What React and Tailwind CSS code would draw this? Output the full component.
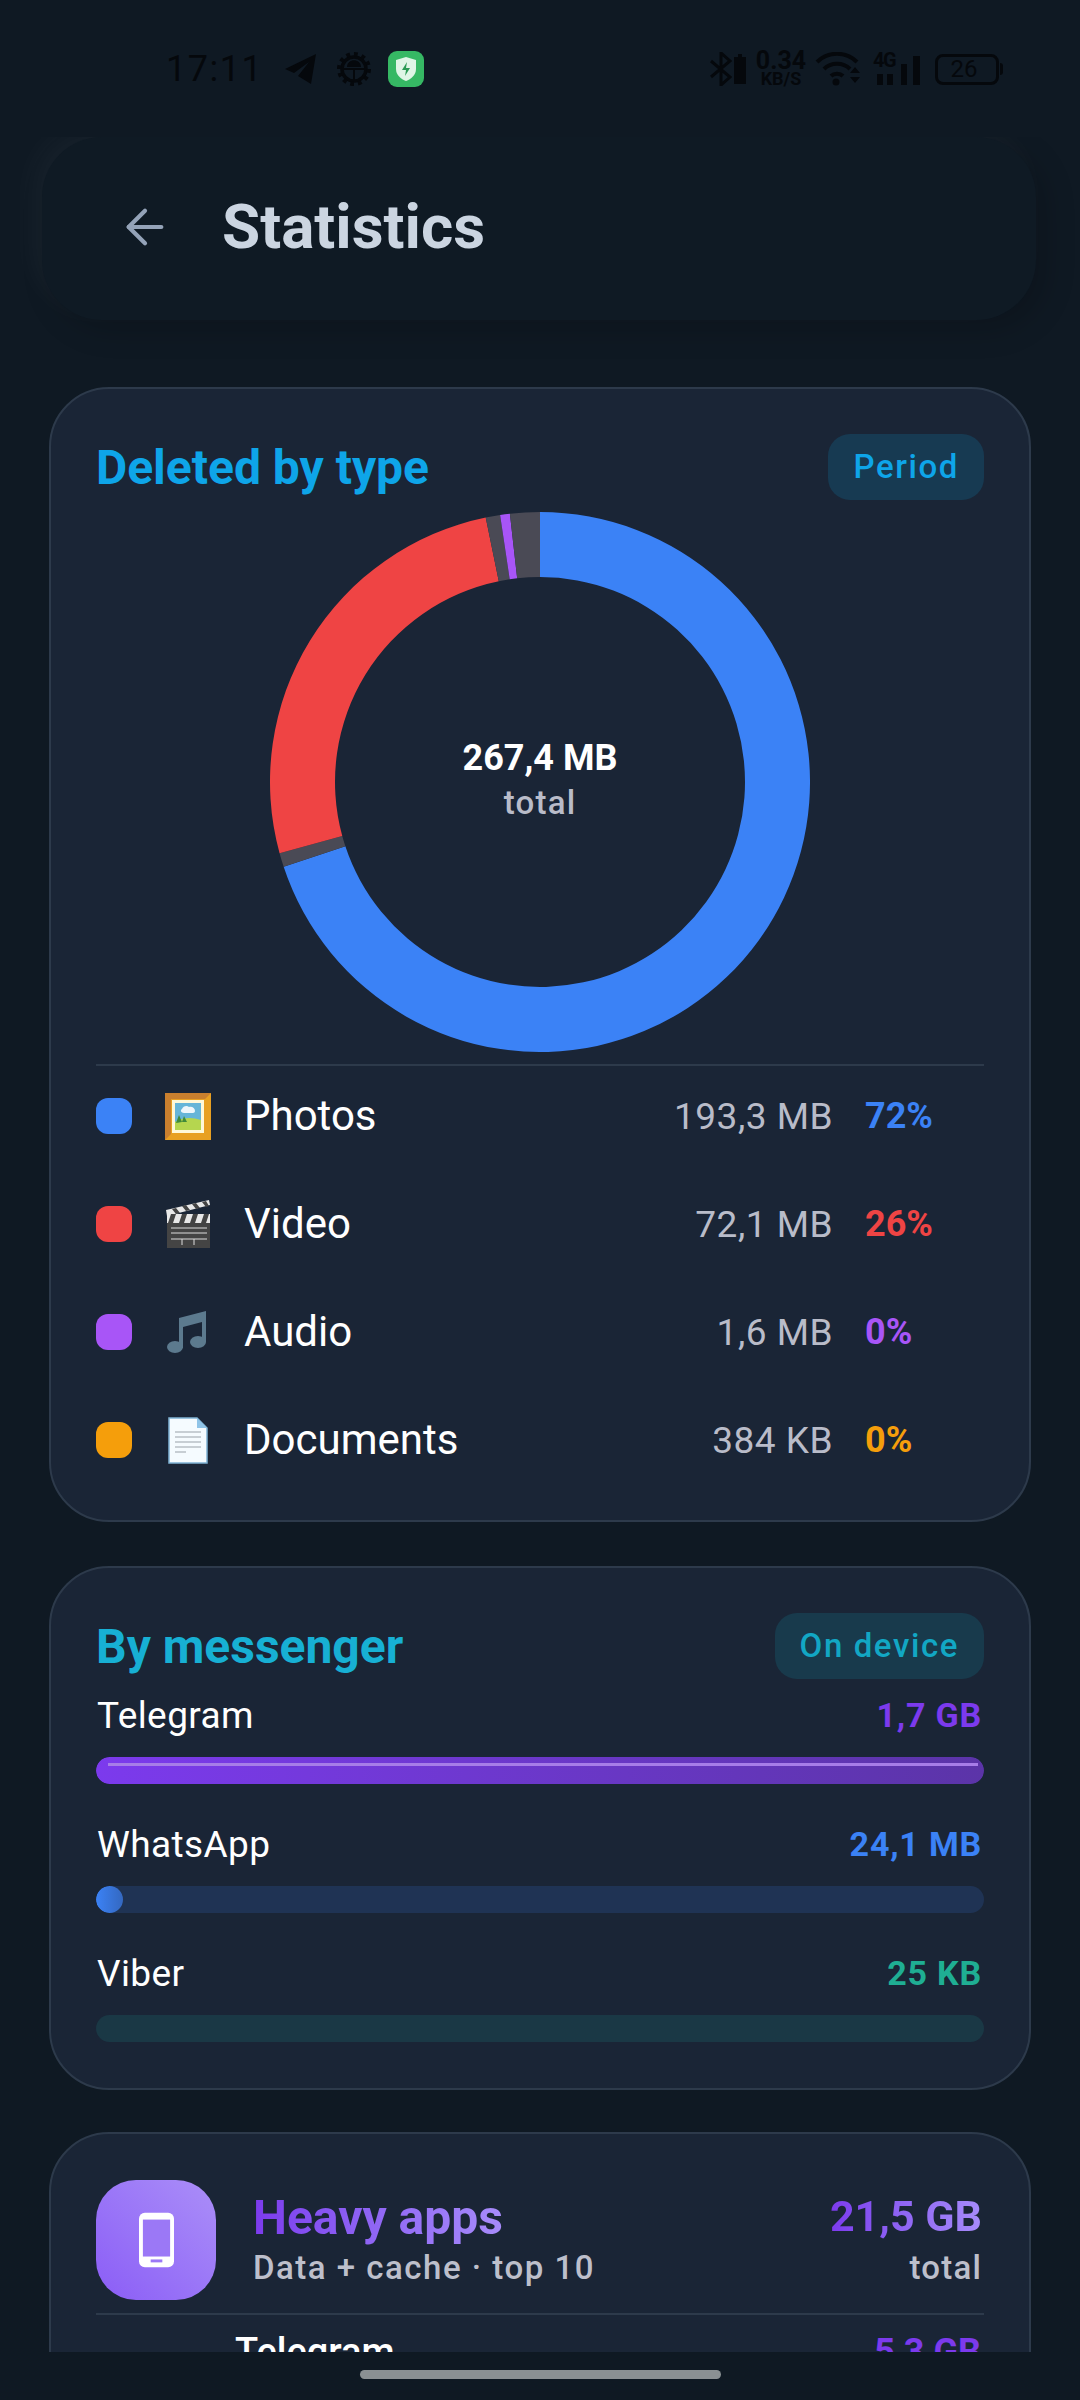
import { ArrowLeft } from 'lucide-react';

const rows = [
  { name: 'Photos', size: '193,3 MB', pct: '72%', dot: 'bg-[#3b82f6]', text: 'text-[#3b82f6]', Icon: PictureIcon },
  { name: 'Video', size: '72,1 MB', pct: '26%', dot: 'bg-[#ef4444]', text: 'text-[#ef4444]', Icon: ClapperIcon },
  { name: 'Audio', size: '1,6 MB', pct: '0%', dot: 'bg-[#a855f7]', text: 'text-[#a855f7]', Icon: NoteIcon },
  { name: 'Documents', size: '384 KB', pct: '0%', dot: 'bg-[#f59e0b]', text: 'text-[#f59e0b]', Icon: DocIcon },
];

const messengers = [
  { name: 'Telegram', size: '1,7 GB', text: 'text-[#7c3aed]', track: 'bg-[#2b2a5a]', fill: 'w-full bg-gradient-to-r from-[#7c3aed] to-[#5b34a8]', shine: true },
  { name: 'WhatsApp', size: '24,1 MB', text: 'text-[#3b82f6]', track: 'bg-[#1f3354]', fill: 'w-[27px] bg-gradient-to-r from-[#3b82f6] to-[#3468c0]' },
  { name: 'Viber', size: '25 KB', text: 'text-[#1fae93]', track: 'bg-[#1a3845]', fill: 'w-0' },
];

const wedge = (from, to, ro = 270, ri = 205) => {
  const pt = (a, r) => {
    const t = (a * Math.PI) / 180;
    return `${(270 + r * Math.sin(t)).toFixed(2)} ${(270 - r * Math.cos(t)).toFixed(2)}`;
  };
  const large = to - from > 180 ? 1 : 0;
  return `M${pt(from, ro)} A${ro} ${ro} 0 ${large} 1 ${pt(to, ro)} L${pt(to, ri)} A${ri} ${ri} 0 ${large} 0 ${pt(from, ri)} Z`;
};

function PictureIcon() {
  return (
    <svg width="46" height="47" viewBox="0 0 46 47">
      <rect width="46" height="47" fill="#e8a022" />
      <path d="M0 0h46l-6 6H6v35l-6 6z" fill="#c97f2e" />
      <rect x="7" y="7" width="32" height="33" fill="#fff8d8" />
      <rect x="10" y="10" width="26" height="27" fill="#66b5d8" />
      <path d="M10 29c8-5 17-5 26-2v10H10z" fill="#b5d64f" />
      <path d="M11 30l3-8 3 7zM17 29l2-6 3 6z" fill="#3f8a3a" />
      <path d="M17 16c1-3 5-4 7-2 3-1 6 1 6 4 0 1-1 2-2 2h-9c-3 0-4-3-2-4z" fill="#eef6fb" />
    </svg>
  );
}

function ClapperIcon() {
  return (
    <svg width="46" height="48" viewBox="0 0 46 48">
      <path d="M1 10L44 0l1 5-43 11z" fill="#e8e8e8" />
      <path d="M7 9l4 5 4-1-4-5zM17 6l4 5 4-1-4-5zM27 4l4 5 4-1-4-5zM37 2l4 5 3-1-3-5z" fill="#444" />
      <rect x="2" y="16" width="43" height="32" fill="#444" />
      <rect x="2" y="14" width="43" height="9" fill="#e8e8e8" />
      <path d="M6 14l-3 9h5l3-9zM17 14l-3 9h5l3-9zM28 14l-3 9h5l3-9zM39 14l-3 9h5l3-9z" fill="#444" />
      <path d="M6 28h36M6 33h36M6 39h36M17 39v6M29 39v6" stroke="#ddd" strokeWidth="1" fill="none" />
    </svg>
  );
}

function NoteIcon() {
  return (
    <svg width="42" height="44" viewBox="0 0 42 44">
      <path d="M12 8L39 1v31h-4V12L16 17v21h-4z" fill="#5c7a8e" />
      <ellipse cx="8" cy="37" rx="8" ry="6" fill="#5c7a8e" />
      <ellipse cx="31" cy="32" rx="8" ry="6" fill="#5c7a8e" />
    </svg>
  );
}

function DocIcon() {
  return (
    <svg width="40" height="47" viewBox="0 0 40 47">
      <path d="M1 1h28l10 10v35H1z" fill="#f5fbff" stroke="#7fb3d5" strokeWidth="1.5" />
      <path d="M29 1l10 10H29z" fill="#90c4e8" />
      <path d="M7 15h26M7 20h26M7 25h26M7 30h26M7 35h11" stroke="#b8c0c6" strokeWidth="1.5" />
    </svg>
  );
}

function StatusBar() {
  return (
    <div className="h-[137px] shrink-0 flex items-start justify-between pl-[166px] pr-[77px] pt-[51px] text-[#05080c]">
      <div className="flex items-center h-[36px]">
        <span className="text-[36px] leading-none tracking-[1.5px] w-[89px]">17:11</span>
        <svg className="ml-[30px]" width="32" height="30" viewBox="0 0 32 30" fill="#05080c">
          <path d="M31 0L0 15l9 4 15-11-11 14 13 8z" />
        </svg>
        <svg className="ml-[20px]" width="34" height="34" viewBox="0 0 34 34" fill="none" stroke="#05080c">
          <circle cx="17" cy="17" r="12" strokeWidth="3.5" />
          <circle cx="17" cy="17" r="15" strokeWidth="4" strokeDasharray="3.8 4" />
          <path d="M6 17h22M17 17v12" strokeWidth="2" />
          <path d="M10 15c0-9 14-9 14 0z" fill="#05080c" strokeWidth="0" />
        </svg>
        <div className="ml-[17px] w-[36px] h-[36px] rounded-[9px] bg-[#36b864] flex items-center justify-center">
          <svg width="22" height="26" viewBox="0 0 22 26">
            <path d="M11 1l10 3v9c0 6-5 10-10 12C6 23 1 19 1 13V4z" fill="#dff5e6" />
            <path d="M12 6l-5 8h4l-1 6 5-8h-4z" fill="#2a9a54" />
          </svg>
        </div>
      </div>
      <div className="flex items-center h-[36px]">
        <svg width="22" height="34" viewBox="0 0 22 34" fill="none" stroke="#05080c" strokeWidth="3">
          <path d="M1 9l19 16-9 8V1l9 8L1 25" />
        </svg>
        <svg className="ml-[2px]" width="12" height="30" viewBox="0 0 12 30" fill="#05080c">
          <path d="M4 0h4v3h4v27H0V3h4z" />
        </svg>
        <div className="ml-[10px] w-[50px] flex flex-col items-center font-bold leading-none">
          <span className="text-[25px] leading-[20px]">0.34</span>
          <span className="text-[18px] leading-[16px]">KB/S</span>
        </div>
        <svg className="ml-[9px]" width="48" height="34" viewBox="0 0 48 34" fill="none" stroke="#05080c" strokeWidth="4">
          <path d="M2 10c11-11 29-11 40 0M9 17c7-7 19-7 26 0M16 24c3-3 9-3 12 0" />
          <circle cx="21" cy="30" r="3.5" fill="#05080c" stroke="none" />
          <path d="M35 21l5-6 5 6zM35 25l5 6 5-6z" fill="#05080c" stroke="none" />
        </svg>
        <div className="ml-[10px] relative w-[47px] h-[32px]">
          <span className="absolute left-0 top-[-3px] text-[20px] leading-none font-bold tracking-[-1.5px]">4G</span>
          <div className="absolute inset-0 flex items-end justify-end">
            <div className="w-[6px] h-[11px] bg-[#05080c]" />
            <div className="ml-[4px] w-[6px] h-[11px] bg-[#05080c]" />
            <div className="ml-[8px] w-[6px] h-[21px] bg-[#05080c]" />
            <div className="ml-[6px] w-[7px] h-[29px] bg-[#05080c]" />
          </div>
        </div>
        <div className="ml-[15px] flex items-center">
          <div className="w-[64px] h-[31px] rounded-[8px] border-[3px] border-[#05080c] flex items-center justify-center text-[24px] leading-none pr-[6px]">
            26
          </div>
          <div className="ml-[1px] w-[3px] h-[12px] bg-[#05080c] rounded-r-sm" />
        </div>
      </div>
    </div>
  );
}

function Pill({ children, className }) {
  return (
    <div className={`h-[66px] px-[25px] rounded-[22px] flex items-center text-[33px] font-medium tracking-[1.6px] ${className}`}>
      {children}
    </div>
  );
}

export default function App() {
  return (
    <div className="w-[1080px] h-[2400px] overflow-hidden flex flex-col bg-[#0f1923] font-['Roboto',sans-serif] text-white">
      <StatusBar />
      <div className="flex-1 min-h-0 overflow-hidden flex flex-col">
        <div className="shrink-0 ml-[42px] mr-[44px] h-[183px] rounded-[60px] bg-[#0f1a24] shadow-[-10px_-10px_30px_rgba(255,255,255,0.04),10px_10px_30px_rgba(0,0,0,0.18)] flex items-center pl-[75px] pb-[4px]">
          <ArrowLeft className="text-[#94a3b8]" size={56} strokeWidth={1.8} />
          <h1 className="ml-[49px] text-[62px] font-bold leading-none text-[#cbd5e1]">Statistics</h1>
        </div>

        <section className="shrink-0 mt-[67px] mx-[49px] h-[1135px] rounded-[60px] bg-[#1a2536] border-2 border-[#2d3a4b] px-[45px] pt-[45px]">
          <div className="flex items-center justify-between h-[66px]">
            <h2 className="text-[48px] font-bold text-[#0ea5e9] pt-[2px]">Deleted by type</h2>
            <Pill className="bg-[#173a52] text-[#0ea5e9]">Period</Pill>
          </div>
          <div className="relative w-[540px] h-[540px] mx-auto mt-[12px]">
            <svg width="540" height="540" viewBox="0 0 540 540">
              <path d={wedge(0, 251.7)} fill="#3b82f6" />
              <path d={wedge(251.7, 254.7)} fill="#4a4a55" />
              <path d={wedge(254.7, 348.4)} fill="#ef4444" />
              <path d={wedge(348.4, 351.5)} fill="#4a4a55" />
              <path d={wedge(351.5, 353.6)} fill="#a855f7" />
              <path d={wedge(353.6, 360)} fill="#4a4a55" />
            </svg>
            <div className="absolute inset-0 flex flex-col items-center justify-center pb-[4px]">
              <span className="text-[36px] font-bold leading-[44px]">267,4 MB</span>
              <span className="text-[33px] font-medium leading-[45px] tracking-[1.2px] text-[#b9bcc9]">total</span>
            </div>
          </div>
          <div className="mt-[12px] h-[2px] bg-[#2d3a4b]" />
          <div className="mt-[-4px]">
            {rows.map((row) => (
              <div key={row.name} className="flex items-center h-[108px]">
                <div className={`w-[36px] h-[36px] rounded-[12px] ${row.dot}`} />
                <div className="ml-[33px] w-[46px] flex justify-center">
                  <row.Icon />
                </div>
                <span className="ml-[33px] text-[42px] leading-none">{row.name}</span>
                <span className="ml-auto text-[37px] leading-none tracking-[0.5px] text-[#b9bcc9]">{row.size}</span>
                <span className={`ml-[32px] w-[119px] text-[36px] font-bold leading-none ${row.text}`}>{row.pct}</span>
              </div>
            ))}
          </div>
        </section>

        <section className="shrink-0 mt-[44px] mx-[49px] h-[524px] rounded-[60px] bg-[#1a2536] border-2 border-[#2d3a4b] px-[45px] pt-[45px]">
          <div className="flex items-center justify-between h-[66px]">
            <h2 className="text-[48px] font-bold text-[#17b0d4] pt-[2px]">By messenger</h2>
            <Pill className="bg-[#183a4c] text-[#12a7c4]">On device</Pill>
          </div>
          <div className="flex flex-col gap-[30px] mt-[6px]">
            {messengers.map((m) => (
              <div key={m.name}>
                <div className="flex items-center justify-between h-[60px] pl-[1px]">
                  <span className="text-[37px] leading-none tracking-[0.4px]">{m.name}</span>
                  <span className={`text-[34px] font-bold leading-none tracking-[0.8px] pr-[2px] ${m.text}`}>{m.size}</span>
                </div>
                <div className={`relative mt-[12px] h-[27px] rounded-full overflow-hidden ${m.track}`}>
                  <div className={`h-full rounded-full ${m.fill}`} />
                  {m.shine && <div className="absolute left-[12px] right-[6px] top-[6px] h-[3px] bg-[#a77de8]" />}
                </div>
              </div>
            ))}
          </div>
        </section>

        <section className="shrink-0 mt-[42px] mx-[49px] rounded-t-[60px] bg-[#1a2536] border-2 border-[#2d3a4b] px-[45px] pt-[46px]">
          <div className="flex items-center h-[120px]">
            <div className="w-[120px] h-[120px] rounded-[40px] bg-gradient-to-tr from-[#8b5cf6] to-[#ab8ef8] flex items-center justify-center">
              <svg width="35" height="56" viewBox="0 0 36 56">
                <rect width="36" height="56" rx="6" fill="#fff" />
                <rect x="4" y="7" width="28" height="38" fill="#9b78f6" />
                <rect x="12" y="48" width="12" height="3" fill="#9b78f6" />
              </svg>
            </div>
            <div className="ml-[37px] flex-1 -mt-[2px]">
              <h2 className="text-[48px] font-bold leading-[54px] bg-gradient-to-r from-[#7c3aed] to-[#a78bfa] bg-clip-text text-transparent w-fit">Heavy apps</h2>
              <p className="mt-[3px] text-[33px] leading-[40px] font-medium tracking-[1.5px] text-[#bdbfcb]">Data + cache · top 10</p>
            </div>
            <div className="text-right pr-[2px] -mt-[2px]">
              <div className="text-[43px] font-bold leading-[50px] bg-gradient-to-r from-[#7c3aed] to-[#a78bfa] bg-clip-text text-transparent">21,5 GB</div>
              <div className="mt-[7px] text-[33px] font-medium leading-[40px] tracking-[1.2px] text-[#bdbfcb]">total</div>
            </div>
          </div>
          <div className="mt-[13px] h-[2px] bg-[#2d3a4b]" />
          <div className="flex items-center justify-between pl-[139px] pr-[3px] mt-[15px]">
            <span className="text-[38px] font-medium leading-[44px]">Telegram</span>
            <span className="text-[36px] font-bold leading-[44px] text-[#7c3aed]">5,3 GB</span>
          </div>
          <div className="h-[100px]" />
        </section>
      </div>
      <div className="relative z-10 shrink-0 h-[48px] bg-[#0f1923] flex justify-center pt-[18px]">
        <div className="w-[361px] h-[9px] rounded-full bg-[#8a9093]" />
      </div>
    </div>
  );
}
